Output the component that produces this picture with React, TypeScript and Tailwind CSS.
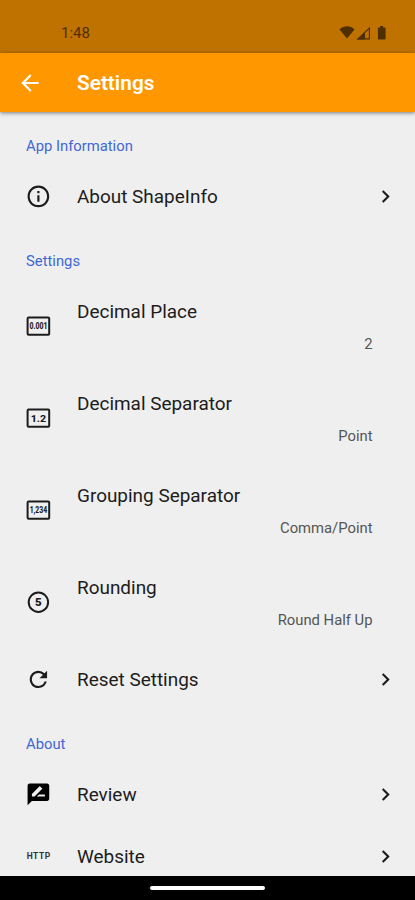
import type { ReactNode } from 'react';
import { MdArrowBack, MdChevronRight, MdInfoOutline, MdRateReview, MdRefresh } from 'react-icons/md';

interface Item {
  title: string;
  icon: ReactNode;
  value?: string;
}

interface Section {
  title: string;
  items: Item[];
}

interface NumberIconProps {
  label: string;
  width: number;
  size: number;
}

const NumberIcon = ({ label, width, size }: NumberIconProps) => (
  <svg viewBox="0 0 26 26" className="h-[26px] w-[26px]" fill="none">
    <rect x="2.2" y="4.4" width="21.6" height="17.2" rx="1" stroke="#1c1c1c" strokeWidth="2" />
    <text
      x="13"
      y={13 + size * 0.36}
      textAnchor="middle"
      textLength={width}
      lengthAdjust="spacingAndGlyphs"
      fontFamily="Roboto, sans-serif"
      fontWeight="800"
      fontSize={size}
      fill="#1c1c1c"
    >
      {label}
    </text>
  </svg>
);

const RoundingIcon = () => (
  <svg viewBox="0 0 26 26" className="h-[26px] w-[26px]" fill="none">
    <circle cx="13" cy="13" r="9.7" stroke="#1c1c1c" strokeWidth="2" />
    <text
      x="13"
      y="17"
      textAnchor="middle"
      fontFamily="Roboto, sans-serif"
      fontWeight="900"
      fontSize="11.5"
      fill="#1c1c1c"
    >
      5
    </text>
  </svg>
);

const HttpIcon = () => (
  <svg viewBox="0 0 26 26" className="h-[26px] w-[26px]">
    <text
      x="1.3"
      y="16"
      textLength="23.5"
      fontFamily="Roboto, sans-serif"
      fontWeight="700"
      fontSize="8.5"
      fill="#333333"
    >
      HTTP
    </text>
  </svg>
);

const sections: Section[] = [
  {
    title: 'App Information',
    items: [{ title: 'About ShapeInfo', icon: <MdInfoOutline size={26} /> }],
  },
  {
    title: 'Settings',
    items: [
      { title: 'Decimal Place', icon: <NumberIcon label="0.001" width={18} size={8.5} />, value: '2' },
      { title: 'Decimal Separator', icon: <NumberIcon label="1.2" width={15.5} size={9.5} />, value: 'Point' },
      { title: 'Grouping Separator', icon: <NumberIcon label="1,234" width={17.5} size={8.7} />, value: 'Comma/Point' },
      { title: 'Rounding', icon: <RoundingIcon />, value: 'Round Half Up' },
      { title: 'Reset Settings', icon: <MdRefresh size={26} /> },
    ],
  },
  {
    title: 'About',
    items: [
      { title: 'Review', icon: <MdRateReview size={26} className="text-black" /> },
      { title: 'Website', icon: <HttpIcon /> },
    ],
  },
];

const StatusBar = () => (
  <div className="flex h-[53px] shrink-0 items-center justify-between bg-[#bf7200] pr-7 pl-[61px] pt-3 text-[#4f2f00]">
    <span className="text-[15px] leading-5">1:48</span>
    <svg viewBox="0 0 48 16" className="h-4 w-12" fill="none">
      <path d="M0.5 4.6C4.6 0.2 11.4 0.2 15.5 4.6L8 13.5z" fill="currentColor" />
      <path d="M30.4 3v10.9H19z" stroke="currentColor" strokeWidth="1.1" />
      <path d="M26 7.5V14.4H17.5z" fill="currentColor" />
      <path d="M39.6 2.4h1.5V1.1h3v1.3H46q.6 0 .6.7v10.6q0 .7-.6.7h-6.4q-.7 0-.7-.7V3.1q0-.7.7-.7z" fill="currentColor" />
    </svg>
  </div>
);

const Row = ({ title, icon, value }: Item) => {
  if (value) {
    return (
      <div className="flex h-[92px] items-center pl-[25px]">
        <div className="translate-x-[0.4px] translate-y-[0.2px]">{icon}</div>
        <div className="flex-1 pt-[3px] pr-[42.5px] pl-[26px]">
          <p className="text-[18.95px] leading-8">{title}</p>
          <p className="text-right text-[14.8px] leading-8 text-[#555555]">{value}</p>
        </div>
      </div>
    );
  }

  return (
    <div className="flex h-[62px] items-center pr-[17px] pl-[25px]">
      <div className="translate-x-[0.4px] translate-y-[0.4px]">{icon}</div>
      <span className="flex-1 pt-[2px] pl-[26px] text-[18.95px]">{title}</span>
      <MdChevronRight size={25} />
    </div>
  );
};

const App = () => (
  <div className="flex h-screen flex-col overflow-hidden bg-[#efefef] font-['Roboto',sans-serif] text-[#1c1c1c]">
    <StatusBar />

    {/* App bar */}
    <header className="z-10 flex h-[59px] shrink-0 items-center bg-[#ff9800] pl-[17px] text-white shadow-[0_1px_4px_rgba(0,0,0,0.5)]">
      <MdArrowBack size={26} />
      <h1 className="pt-[2px] pl-[34px] text-[20.8px] font-semibold">Settings</h1>
    </header>

    <main className="min-h-0 flex-1 overflow-hidden">
      {sections.map((section) => (
        <section key={section.title}>
          <h2 className="h-[53px] pt-[16.4px] pl-[26px] text-[14.8px] leading-9 text-[#4267d5]">{section.title}</h2>
          {section.items.map((item) => (
            <Row key={item.title} {...item} />
          ))}
        </section>
      ))}
    </main>

    {/* Gesture bar */}
    <div className="flex h-6 shrink-0 items-center justify-center bg-black">
      <div className="h-1 w-[115px] rounded-full bg-white" />
    </div>
  </div>
);

export default App;
